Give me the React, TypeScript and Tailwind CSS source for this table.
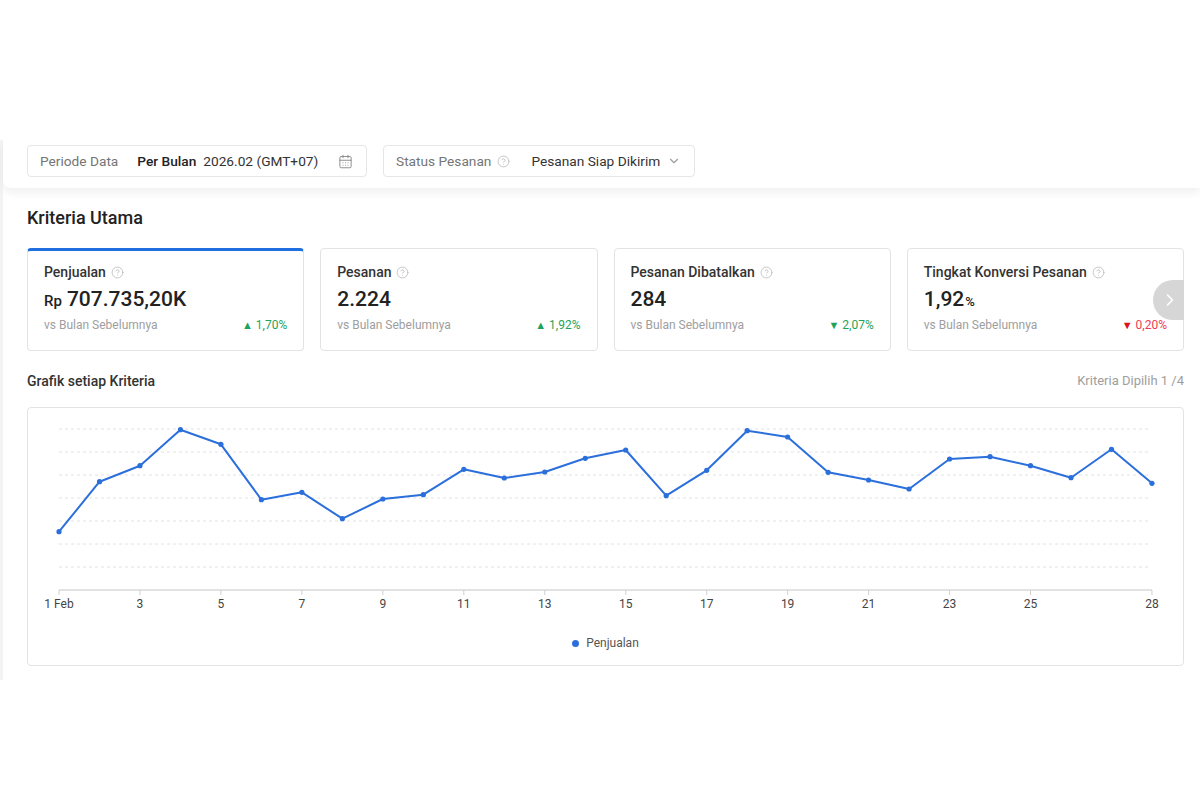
import React from "react";
import { CalendarDays, ChevronDown, ChevronRight, CircleHelp } from "lucide-react";

type Metric = {
  title: string;
  prefix?: string;
  value: string;
  suffix?: string;
  change: string;
  up: boolean;
  good: boolean;
  active?: boolean;
};

const metrics: Metric[] = [
  { title: "Penjualan", prefix: "Rp", value: "707.735,20K", change: "1,70%", up: true, good: true, active: true },
  { title: "Pesanan", value: "2.224", change: "1,92%", up: true, good: true },
  { title: "Pesanan Dibatalkan", value: "284", change: "2,07%", up: false, good: true },
  { title: "Tingkat Konversi Pesanan", value: "1,92", suffix: "%", change: "0,20%", up: false, good: false },
];

// y position (page px) of each day's point
const sales = [
  531.7, 481.7, 465.7, 429.7, 444.3, 499.7, 492.3, 518.7, 499, 494.7, 469.3, 478, 472, 458.3,
  450, 495.7, 470.3, 430.7, 437, 472.3, 480, 489, 459, 456.7, 465.7, 477.7, 449.3, 483.3,
];

const gridY = [429, 452, 475, 498, 521, 544, 567];
const OX = 28;
const OY = 408;
const dayX = (d: number) => 59 + (d - 1) * 40.48 - OX;

const MetricCard = ({ m }: { m: Metric }) => {
  const color = m.good ? "text-[#1fa35a]" : "text-[#ee3b55]";
  const tri = m.good ? "text-[#1fa35a]" : "text-[#d8141f]";
  return (
    <div
      className={
        "rounded-[4px] border bg-white px-4 pb-[17px] " +
        (m.active
          ? "border-[#e3e3e3] border-t-[3px] border-t-[#1f6fe0] pt-[11px]"
          : "border-[#e3e3e3] pt-[13px]")
      }
    >
      <div className="flex items-center gap-[5px] text-[14px] leading-[20px] font-medium text-[#333]">
        {m.title}
        <CircleHelp size={13} color="#bdbdbd" strokeWidth={1.6} />
      </div>
      <div className="mt-[3px] flex h-[28px] items-baseline overflow-hidden text-[#222]">
        {m.prefix && <span className="mr-[5px] text-[15px] leading-[28px] font-medium">{m.prefix}</span>}
        <span className="text-[21px] leading-[28px] font-medium">{m.value}</span>
        {m.suffix && <span className="ml-[1px] text-[13px] leading-[28px] font-medium">{m.suffix}</span>}
      </div>
      <div className="mt-[4px] flex items-center justify-between text-[12px] leading-[16px]">
        <span className="text-[#9e9e9e]">vs Bulan Sebelumnya</span>
        <span className={"flex items-center gap-[3px] " + color}>
          <span className={"text-[11px] leading-none " + tri}>{m.up ? "▲" : "▼"}</span>
          {m.change}
        </span>
      </div>
    </div>
  );
};

const Chart = () => {
  const pts = sales.map((y, i) => [dayX(i + 1), y - OY] as const);
  const line = pts.map(([x, y]) => `${x.toFixed(1)},${y.toFixed(1)}`).join(" ");
  const labels = [1, 3, 5, 7, 9, 11, 13, 15, 17, 19, 21, 23, 25, 28];
  const axisY = 590 - OY;
  return (
    <svg width="1155" height="212" className="block">
      {gridY.map((g) => (
        <line
          key={g}
          x1={dayX(1)}
          x2={dayX(28) - 2}
          y1={g - OY}
          y2={g - OY}
          stroke="#e2e2e2"
          strokeDasharray="3 3"
        />
      ))}
      <line x1={dayX(1)} x2={dayX(28)} y1={axisY} y2={axisY} stroke="#d9d9d9" strokeWidth="1.5" />
      {labels.map((d) => (
        <g key={d}>
          <line x1={dayX(d)} x2={dayX(d)} y1={axisY} y2={axisY + 5} stroke="#d0d0d0" />
          <text
            x={dayX(d)}
            y={axisY + 18}
            textAnchor="middle"
            fontSize="12"
            fill="#444"
            fontFamily="Roboto, sans-serif"
          >
            {d === 1 ? "1 Feb" : d}
          </text>
        </g>
      ))}
      <polyline points={line} fill="none" stroke="#2b6fdc" strokeWidth="2" strokeLinejoin="round" />
      {pts.map(([x, y], i) => (
        <circle key={i} cx={x} cy={y} r="2.6" fill="#2b6fdc" />
      ))}
    </svg>
  );
};

export default function App() {
  return (
    <div className="h-[800px] bg-white pt-[140px] font-['Roboto','Liberation_Sans',sans-serif]">
      <div className="h-[540px] bg-[#f3f3f3] pl-[3px]">
        <div className="h-full bg-white">
          {/* Filters */}
          <div className="relative z-10 flex h-[48px] gap-4 rounded-bl-[8px] bg-white pl-[24px] pt-[5px] shadow-[0_5px_8px_rgba(0,0,0,0.06)]">
            <div className="flex h-[32px] w-[340px] items-center rounded-[4px] border border-[#e6e6e6] pl-[12px] pr-[13px] text-[13.7px]">
              <span className="text-[#757575]">Periode Data</span>
              <span className="ml-[19px] font-medium text-[#222]">Per Bulan</span>
              <span className="ml-[7px] text-[#333]">2026.02 (GMT+07)</span>
              <CalendarDays size={15} color="#8a8a8a" strokeWidth={1.5} className="ml-auto" />
            </div>
            <div className="flex h-[32px] w-[312px] items-center rounded-[4px] border border-[#e6e6e6] pl-[12px] pr-[13px] text-[13.7px]">
              <span className="text-[#757575]">Status Pesanan</span>
              <CircleHelp size={13} color="#bdbdbd" strokeWidth={1.6} className="ml-[6px]" />
              <span className="ml-[21px] text-[#333]">Pesanan Siap Dikirim</span>
              <ChevronDown size={14} color="#9e9e9e" className="ml-auto" />
            </div>
          </div>

          {/* Main */}
          <div className="pl-[24px] pr-[16px]">
            <h2 className="mt-[18px] text-[18px] leading-[24px] font-medium text-[#222]">Kriteria Utama</h2>
            <div className="relative mt-[18px] grid grid-cols-4 gap-4">
              {metrics.map((m) => (
                <MetricCard key={m.title} m={m} />
              ))}
              <div className="absolute right-0 top-[32px] flex h-[40px] w-[31px] items-center justify-end rounded-l-full bg-[#d6d6d6] pr-[4px]">
                <ChevronRight size={20} color="#fff" strokeWidth={2} />
              </div>
            </div>

            <div className="mt-[20px] flex items-center justify-between">
              <span className="text-[14px] leading-[20px] font-medium text-[#333]">Grafik setiap Kriteria</span>
              <span className="text-[13px] text-[#9e9e9e]">Kriteria Dipilih 1 /4</span>
            </div>

            <div className="mt-[16px] h-[259px] rounded-[4px] border border-[#e3e3e3]">
              <Chart />
              <div className="mt-[14px] flex items-center justify-center gap-[7px] text-[12px] text-[#555]">
                <span className="h-[7px] w-[7px] rounded-full bg-[#2b6fdc]" />
                Penjualan
              </div>
            </div>
          </div>
        </div>
      </div>
    </div>
  );
}
